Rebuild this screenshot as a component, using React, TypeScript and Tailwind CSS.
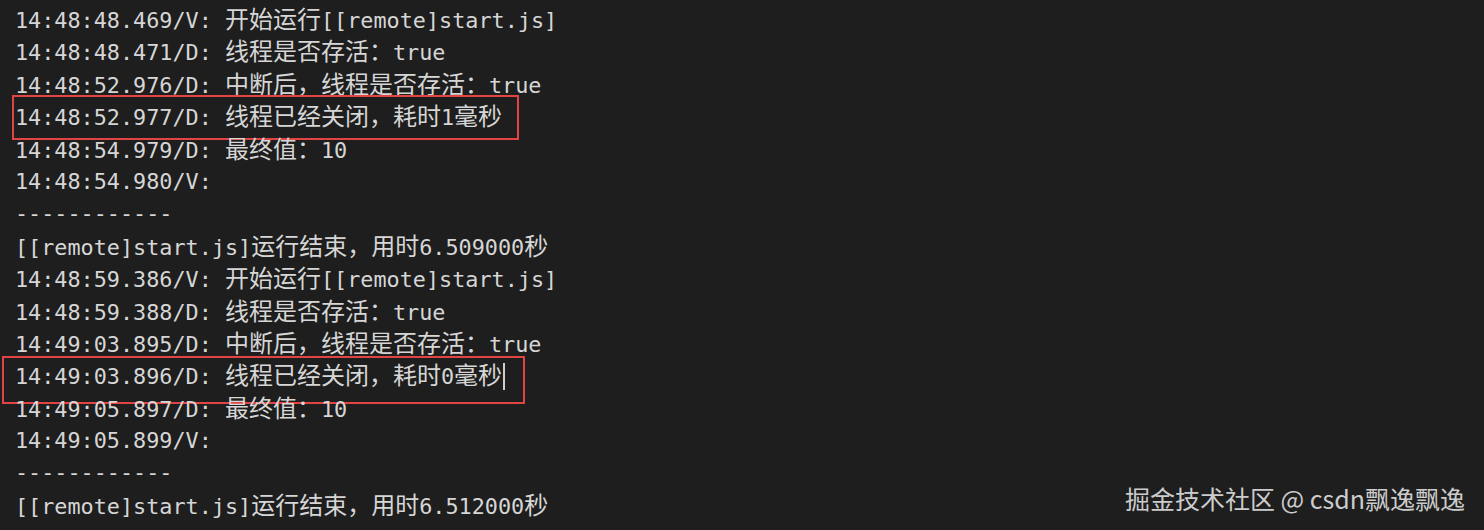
import React from "react";

const MONO = "font-['DejaVu_Sans_Mono','Noto_Sans_CJK_SC',monospace]";

type Row = { text: string; boxed?: "a" | "b"; cursor?: boolean };

const rows: Row[] = [
  { text: "14:48:48.469/V: 开始运行[[remote]start.js]" },
  { text: "14:48:48.471/D: 线程是否存活：true" },
  { text: "14:48:52.976/D: 中断后，线程是否存活：true" },
  { text: "14:48:52.977/D: 线程已经关闭，耗时1毫秒", boxed: "a" },
  { text: "14:48:54.979/D: 最终值：10" },
  { text: "14:48:54.980/V:" },
  { text: "------------" },
  { text: "[[remote]start.js]运行结束，用时6.509000秒" },
  { text: "14:48:59.386/V: 开始运行[[remote]start.js]" },
  { text: "14:48:59.388/D: 线程是否存活：true" },
  { text: "14:49:03.895/D: 中断后，线程是否存活：true" },
  { text: "14:49:03.896/D: 线程已经关闭，耗时0毫秒", boxed: "b", cursor: true },
  { text: "14:49:05.897/D: 最终值：10" },
  { text: "14:49:05.899/V:" },
  { text: "------------" },
  { text: "[[remote]start.js]运行结束，用时6.512000秒" },
];

// split into ascii / wide runs so CJK glyphs get their own size
function runs(text: string) {
  const out: { wide: boolean; s: string }[] = [];
  for (const ch of text) {
    const wide = ch.charCodeAt(0) > 0x7f;
    const last = out[out.length - 1];
    if (last && last.wide === wide) last.s += ch;
    else out.push({ wide, s: ch });
  }
  return out;
}

function LogLine({ row }: { row: Row }) {
  return (
    <div className="relative h-[32.4px] leading-[32.4px] whitespace-pre">
      {runs(row.text).map((r, i) =>
        r.wide ? (
          <span key={i} className="text-[24px]">
            {r.s}
          </span>
        ) : (
          <span key={i}>{r.s}</span>
        )
      )}
      {row.cursor && (
        <span className="inline-block w-[2px] h-[27px] ml-[1px] align-[-6px] bg-[#cfcfcf]" />
      )}
      {row.boxed === "a" && (
        <div className="absolute left-[-3px] top-[-6px] w-[507px] h-[45px] border-2 border-[#e24444]" />
      )}
      {row.boxed === "b" && (
        <div className="absolute left-[-13px] top-[-4px] w-[523px] h-[48px] border-2 border-[#e24444]" />
      )}
    </div>
  );
}

export default function App() {
  return (
    <div className="relative w-[1484px] h-[530px] overflow-hidden bg-[#1e1e1e]">
      <div className={`${MONO} text-[21.8px] text-[#d6d6d6] pl-[15px] pt-[4px]`}>
        {rows.map((row, i) => (
          <LogLine key={i} row={row} />
        ))}
      </div>

      {/* watermark */}
      <div className="absolute right-[19px] bottom-[15px] font-['Noto_Sans_CJK_SC','Noto_Sans',sans-serif] text-[25px] leading-[34px] text-[#cccccc]">
        掘金技术社区 @ csdn飘逸飘逸
      </div>
    </div>
  );
}
